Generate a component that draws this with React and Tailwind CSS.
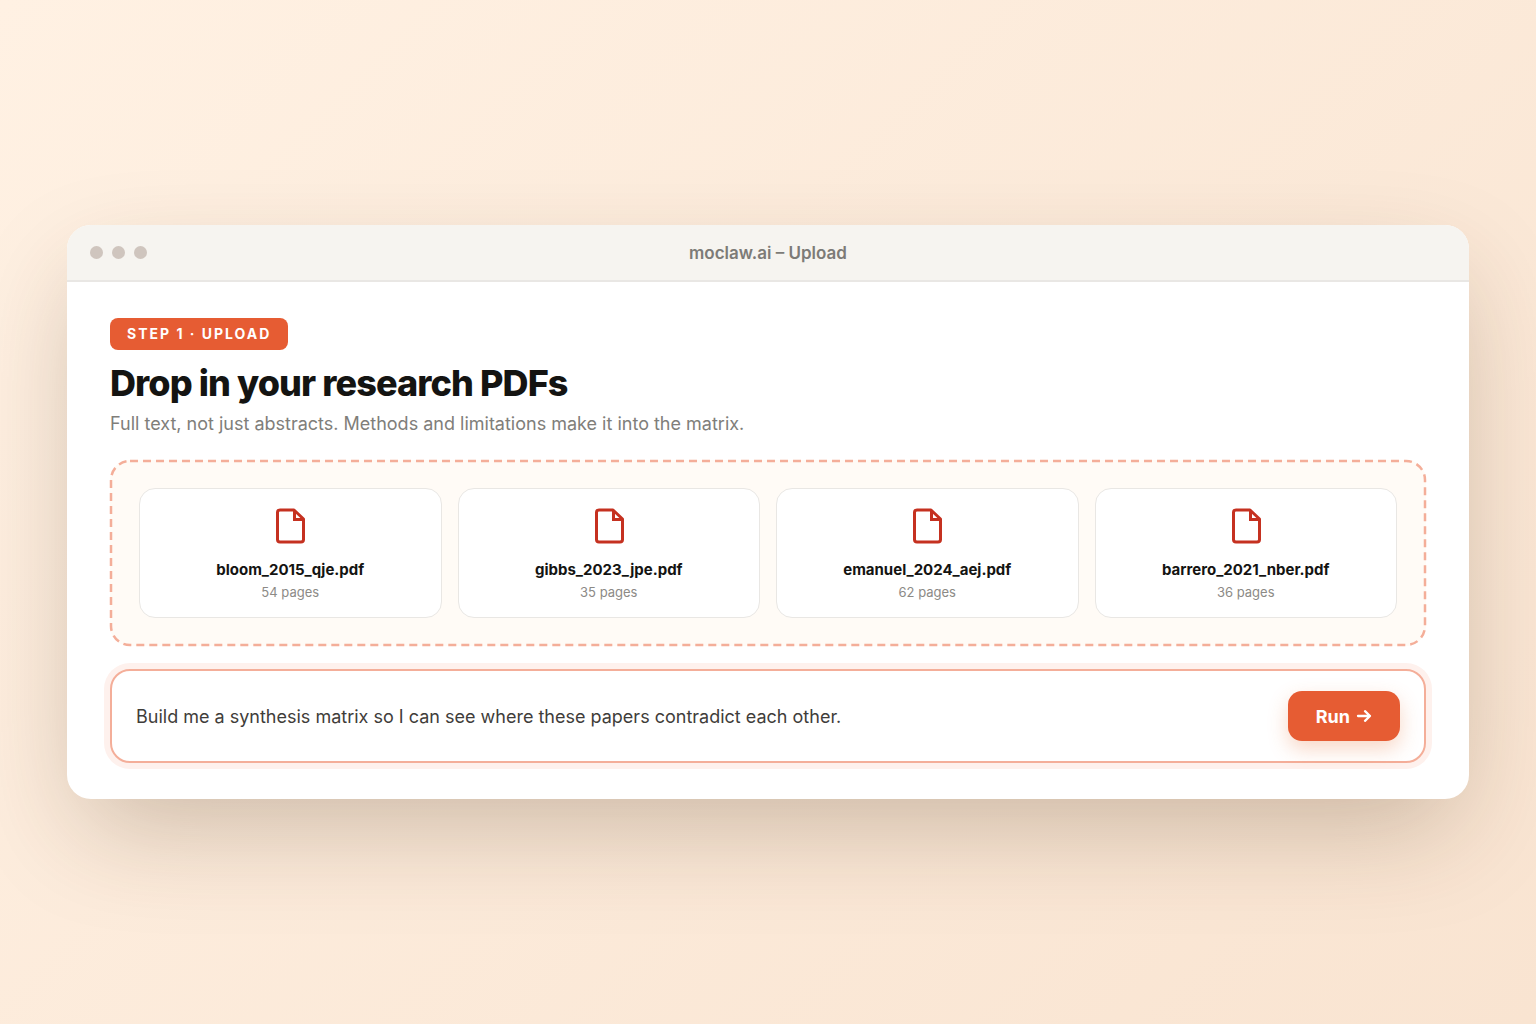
import { useState } from "react";

const files = [
  { name: "bloom_2015_qje.pdf", pages: 54 },
  { name: "gibbs_2023_jpe.pdf", pages: 35 },
  { name: "emanuel_2024_aej.pdf", pages: 62 },
  { name: "barrero_2021_nber.pdf", pages: 36 },
];

function FileIcon() {
  return (
    <svg
      className="w-8 h-9"
      viewBox="0 0 32 36"
      fill="none"
      stroke="#c53120"
      strokeWidth="3"
      strokeLinejoin="round"
      aria-hidden="true"
    >
      <path d="M6 2H20L29.5 11V31.5A2.5 2.5 0 0 1 27 34H6A2.5 2.5 0 0 1 3.5 31.5V4.5A2.5 2.5 0 0 1 6 2Z" />
      <path d="M20.5 2V11.5H29.5" strokeLinejoin="miter" />
    </svg>
  );
}

function FileCard({ file }) {
  return (
    <li className="flex flex-col items-center rounded-2xl border border-[#e9e7e4] bg-white pt-[19px] pb-[15px]">
      <FileIcon />
      <span className="mt-4 text-[15px] leading-5 font-bold text-[#141412]">{file.name}</span>
      <span className="mt-[2px] text-[13px] leading-5 text-[#8c8a86]">{file.pages} pages</span>
    </li>
  );
}

function DropZone() {
  return (
    <div className="relative mt-6 rounded-[20px] bg-[#fffbf6] px-[29px] py-7">
      {/* Dashed outline */}
      <svg className="absolute inset-0 h-full w-full overflow-visible p-px" aria-hidden="true">
        <rect width="100%" height="100%" rx="19" fill="none" stroke="#f4ae99" strokeWidth="2.5" strokeDasharray="8 5" />
      </svg>
      <ul className="grid grid-cols-4 gap-4">
        {files.map((file) => (
          <FileCard key={file.name} file={file} />
        ))}
      </ul>
    </div>
  );
}

function PromptBar() {
  const [prompt, setPrompt] = useState(
    "Build me a synthesis matrix so I can see where these papers contradict each other."
  );

  return (
    <form
      className="mt-[23px] flex items-center gap-4 rounded-[20px] border-2 border-[#f4ae99] bg-white px-6 py-5 shadow-[0_0_0_6px_#fef1ed]"
      onSubmit={(e) => e.preventDefault()}
    >
      <input
        type="text"
        aria-label="Prompt"
        value={prompt}
        onChange={(e) => setPrompt(e.target.value)}
        className="h-[50px] min-w-0 flex-1 bg-transparent text-[18px] text-[#3f3d3a] outline-none"
      />
      <button
        type="submit"
        className="flex h-[50px] items-center gap-[6px] rounded-[14px] bg-[#e65c33] px-7 text-[18px] font-bold text-white shadow-[0_8px_20px_rgba(230,110,51,0.28)]"
      >
        Run
        <svg
          className="h-4 w-4"
          viewBox="0 0 16 16"
          fill="none"
          stroke="currentColor"
          strokeWidth="2.3"
          strokeLinecap="round"
          strokeLinejoin="round"
          aria-hidden="true"
        >
          <path d="M2 8H14M9 3.2L14 8L9 12.8" />
        </svg>
      </button>
    </form>
  );
}

export default function App() {
  return (
    <div className="flex min-h-screen items-center bg-linear-135 from-[#fff1e3] to-[#f9e4d1] px-[67px] font-['Inter',sans-serif]">
      <div className="w-full rounded-3xl bg-white shadow-[0_40px_106px_-16px_rgba(70,45,20,0.27)]">
        <header className="grid h-[57px] grid-cols-3 items-center rounded-t-3xl border-b-2 border-[#e9e7e4] bg-[#f6f4f0] px-[23px]">
          <div className="flex gap-[9px]">
            <span className="h-[13px] w-[13px] rounded-full bg-[#cfc5be]" />
            <span className="h-[13px] w-[13px] rounded-full bg-[#cfc5be]" />
            <span className="h-[13px] w-[13px] rounded-full bg-[#cfc5be]" />
          </div>
          <span className="text-center text-[17px] leading-7 font-semibold text-[#7d7b77]">moclaw.ai – Upload</span>
        </header>

        <main className="px-[43px] py-9">
          <span className="inline-block rounded-lg bg-[#e65c33] px-[17px] py-[6px] text-[14px] leading-5 font-bold tracking-[2px] text-white">
            STEP 1 · UPLOAD
          </span>
          <h1 className="mt-[11px] text-[36px] leading-[44px] font-extrabold tracking-tight text-[#141412]">
            Drop in your research PDFs
          </h1>
          <p className="mt-[7px] text-[18px] leading-6 text-[#807e7a]">
            Full text, not just abstracts. Methods and limitations make it into the matrix.
          </p>

          <DropZone />
          <PromptBar />
        </main>
      </div>
    </div>
  );
}
